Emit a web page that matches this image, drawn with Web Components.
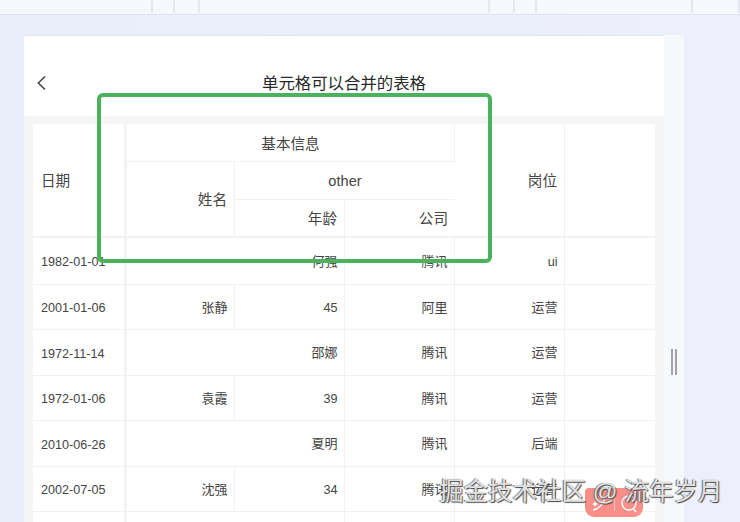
<!DOCTYPE html>
<html lang="zh"><head><meta charset="utf-8">
<style>
html,body{margin:0;padding:0;height:522px;overflow:hidden;background:#edf0fb;}
body{font-family:"Liberation Sans","Noto Sans CJK SC",sans-serif;color:#333;}
</style></head><body>
<x-app>
  <x-topbar slot="top"></x-topbar>
  <x-panel title-text="单元格可以合并的表格">
    <x-merge-table></x-merge-table>
  </x-panel>
</x-app>
<x-marks></x-marks>
<script>
class XApp extends HTMLElement{constructor(){super();this.attachShadow({mode:'open'}).innerHTML=`<style>
:host{display:flex;flex-direction:column;width:740px;height:522px;overflow:hidden;background:#edf0fb;}
.body{flex:1;padding:20px 56px 0 24px;min-height:0;display:flex;background:linear-gradient(90deg,#e9eff8 0,#e9eef8 24px,#edf0fb 684px);}
.strip{flex:1;min-width:0;display:flex;background:#f6f8fc;padding-right:20px;}
</style><slot name="top"></slot><div class="body"><div class="strip"><slot></slot></div></div>`;}}
class XTopbar extends HTMLElement{constructor(){super();
const w=[153,22,25,290,25,22,156,47];
this.attachShadow({mode:'open'}).innerHTML=`<style>
:host{display:flex;flex:none;height:15px;box-sizing:border-box;background:#f6f8fe;border-bottom:1px solid #dfe3ef;}
i{display:block;height:13px;border-right:2px solid #e4e7f0;box-sizing:border-box;}
</style>`+w.map(x=>`<i style="width:${x}px"></i>`).join('');}}
class XPanel extends HTMLElement{constructor(){super();this.attachShadow({mode:'open'}).innerHTML=`<style>
:host{display:flex;flex-direction:column;flex:1;min-width:0;background:#f5f5f5;border-top:1px solid #e1e4ec;}
header{flex:none;height:80px;background:#fff;display:grid;grid-template-columns:40px 1fr 40px;align-items:center;padding-top:14px;box-sizing:border-box;}
svg{display:block;margin-left:12px;}
h1{margin:0;text-align:center;font-weight:400;font-size:16.4px;color:#2a2a2a;line-height:24px;}
.c{flex:1;min-height:0;padding:8px 9px 0;overflow:hidden;}
</style><header><svg width="12" height="16" viewBox="0 0 12 16"><path d="M9 1.5 2.3 8 9 14.5" fill="none" stroke="#444" stroke-width="1.5"/></svg><h1></h1><span></span></header><div class="c"><slot></slot></div>`;
this.shadowRoot.querySelector('h1').textContent=this.getAttribute('title-text');}}
class XMergeTable extends HTMLElement{constructor(){super();
const rows=[
['1982-01-01','','何强','腾讯','ui',47],
['2001-01-06','张静','45','阿里','运营',45],
['1972-11-14','','邵娜','腾讯','运营',46],
['1972-01-06','袁霞','39','腾讯','运营',45],
['2010-06-26','','夏明','腾讯','后端',46],
['2002-07-05','沈强','34','腾讯','运营',45],
['','','','','',45]];
const cls=t=>/^[\d\-a-z]+$/.test(t)?' l':' z';
let body='';
rows.forEach(r=>{
 body+=`<div class="row" style="height:${r[5]}px"><div class="c d${cls(r[0])}">${r[0]}</div><div class="fx"></div>`+
 (r[1]===''?`<div class="c s2${cls(r[2])}">${r[2]}</div>`:`<div class="c${cls(r[1])}">${r[1]}</div><div class="c${cls(r[2])}">${r[2]}</div>`)+
 `<div class="c${cls(r[3])}">${r[3]}</div><div class="c${cls(r[4])}">${r[4]}</div><div class="c e"></div></div>`;});
this.attachShadow({mode:'open'}).innerHTML=`<style>
:host{display:block;width:622px;background:#fff;}
.head{display:grid;grid-template-columns:91px 3px 108px 110px 110px 110px 90px;grid-template-rows:38px 38px 38px;font-size:14.6px;color:#444;box-sizing:border-box;height:114px;position:relative;box-shadow:inset 0 -2px 0 #f2f2f2;}
.head>div{display:flex;align-items:center;justify-content:flex-end;padding:0 7px 0 0;box-sizing:border-box;}
.head .b{border-right:1px solid #f1f1f1;}
.head .u{border-bottom:1px solid #f1f1f1;}
.head .date{grid-row:1/4;justify-content:flex-start;padding-left:8px;padding-bottom:4px;}
.head .fx,.row .fx{background:#f3f3f3;padding:0;}
.head .fx{grid-row:1/4;grid-column:2;}
.head .basic{grid-column:3/6;grid-row:1;justify-content:center;padding:0;}
.head .name{grid-column:3;grid-row:2/4;padding-bottom:3px;}
.head .other{grid-column:4/6;grid-row:2;justify-content:center;padding:0;}
.head .age{grid-column:4;grid-row:3;padding-bottom:3px;}.head .co{grid-column:5;grid-row:3;padding-bottom:3px;}
.head .job{grid-column:6;grid-row:1/4;padding-bottom:3px;}
.head .end{grid-column:7;grid-row:1/4;padding:0}
.row{display:grid;grid-template-columns:91px 3px 108px 110px 110px 110px 90px;font-size:12.6px;color:#444;box-sizing:border-box;border-bottom:1px solid #f1f1f1;}
.c{display:flex;align-items:center;justify-content:flex-end;padding-right:6.5px;border-right:1px solid #f1f1f1;box-sizing:border-box;}
.c.l{padding-top:2px;}
.c.z{font-size:13px;padding-bottom:2px;}
.c.d{justify-content:flex-start;padding-left:8px;border-right:0;}
.c.s2{grid-column:span 2;}
.c.e{border:0;}
</style><div class="head">
<div class="date">日期</div><div class="fx"></div>
<div class="basic b u">基本信息</div>
<div class="name b">姓名</div><div class="other u">other</div>
<div class="age b">年龄</div><div class="co">公司</div>
<div class="job b">岗位</div><div class="end"></div>
</div>${body}`;}}
class XMarks extends HTMLElement{constructor(){super();this.attachShadow({mode:'open'}).innerHTML=`<style>
:host{position:absolute;left:0;top:0;width:740px;height:522px;pointer-events:none;display:block;overflow:hidden;}
.box{position:absolute;left:97px;top:93px;width:395px;height:170px;box-sizing:border-box;border:4px solid #4ab25c;border-radius:6px;}
.grip{position:absolute;left:671px;top:349px;width:6px;height:26px;box-sizing:border-box;border-left:2px solid #a2a2a2;border-right:2px solid #a2a2a2;}
.badge{position:absolute;left:585px;top:488px;width:58px;height:29px;background:#f98f88;border-radius:4px 4px 9px 9px;display:flex;align-items:center;justify-content:center;gap:3px;}
.badge b{display:block;width:1px;height:16px;background:#ffffff80;}
.wm{position:absolute;left:439px;top:477px;font-size:24.5px;line-height:30px;white-space:nowrap;color:#e2e2e2;text-shadow:1px 1px 1px #444,-1px 0 1px #666;}
</style><div class="box"></div><div class="grip"></div>
<div class="badge"><svg width="22" height="20" viewBox="0 0 22 20" fill="none" stroke="#fff" stroke-width="1.3"><path d="M4 17c6-1 10-6 12-12"/><path d="M6 8l1 2 2 1-2 1-1 2-1-2-2-1 2-1z" fill="#fff" stroke="none"/></svg><b></b><svg width="22" height="22" viewBox="0 0 22 22" fill="none" stroke="#fff" stroke-width="1.4"><circle cx="11" cy="11" r="7"/><path d="M15 16l3 4"/></svg></div>
<div class="wm">掘金技术社区 @ 流年岁月</div>`;}}
customElements.define('x-app',XApp);
customElements.define('x-topbar',XTopbar);
customElements.define('x-panel',XPanel);
customElements.define('x-merge-table',XMergeTable);
customElements.define('x-marks',XMarks);
</script>
</body></html>
